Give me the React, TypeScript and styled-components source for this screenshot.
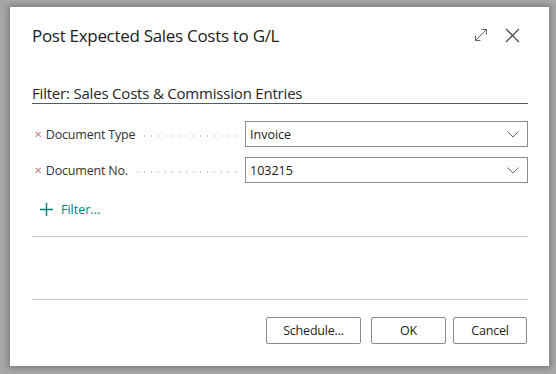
import React from "react";
import styled, { createGlobalStyle } from "styled-components";

const Global = createGlobalStyle`
  html, body { margin: 0; padding: 0; background: #a7a7a7; }
  body { font-family: "Open Sans", "Noto Sans", sans-serif; }
  * { box-sizing: border-box; }
`;

const Page = styled.div`
  width: 556px;
  height: 374px;
  padding: 7px 7px 8px 10px;
  display: flex;
  align-items: flex-start;
`;

const Dialog = styled.div`
  width: 539px;
  height: 359px;
  background: #fff;
  box-shadow: 0 0 6px 2px rgba(0, 0, 0, 0.25);
  padding: 0 21px 0 22px;
  display: flex;
  flex-direction: column;
`;

const Header = styled.div`
  display: flex;
  align-items: center;
  justify-content: space-between;
  height: 56px;
`;

const Title = styled.h1`
  margin: 0;
  font-size: 17px;
  font-weight: 500;
  color: #1c1c1c;
  letter-spacing: -0.3px;
`;

const HeaderIcons = styled.div`
  display: flex;
  align-items: center;
  gap: 17px;
  margin-right: 8px;
  color: #505050;
`;

const SectionTitle = styled.div`
  margin-top: 20px;
  font-size: 15px;
  font-weight: 500;
  color: #262626;
  letter-spacing: -0.2px;
  padding-bottom: 0px;
  border-bottom: 1px solid #4f5d6b;
`;

const Fields = styled.div`
  display: flex;
  flex-direction: column;
  gap: 10px;
  margin-top: 17px;
`;

const Row = styled.div`
  display: flex;
  align-items: center;
  height: 26px;
`;

const Label = styled.div`
  width: 213px;
  display: flex;
  align-items: center;
  font-size: 12.5px;
  letter-spacing: -0.2px;
  color: #333;
  padding-left: 2px;
`;

const Remove = styled.span`
  color: #c48080;
  font-size: 10px;
  margin-right: 4px;
  line-height: 1;
`;

const Leader = styled.span`
  flex: 1;
  height: 2px;
  margin: 4px 4px 0 6px;
  background-image: radial-gradient(circle, #c8c8c8 0.8px, transparent 1px);
  background-size: 7px 2px;
  background-repeat: repeat-x;
`;

const Select = styled.div`
  flex: 1;
  height: 26px;
  border: 1px solid #8a8a8a;
  display: flex;
  align-items: center;
  justify-content: space-between;
  padding: 0 8px 0 4px;
  font-size: 12.5px;
  color: #212121;
`;

const AddFilter = styled.div`
  display: flex;
  align-items: center;
  gap: 8px;
  margin-top: 18px;
  padding-left: 8px;
  font-size: 12.5px;
  color: #00807b;
`;

const Divider = styled.div<{ $top: number }>`
  margin-top: ${(p) => p.$top}px;
  height: 1px;
  background: #c4c4c4;
`;

const Footer = styled.div`
  display: flex;
  justify-content: flex-end;
  margin-top: 17px;
  padding-right: 1px;
`;

const Button = styled.button<{ $w: number; $gap?: number }>`
  width: ${(p) => p.$w}px;
  margin-left: ${(p) => p.$gap ?? 0}px;
  height: 27px;
  background: #fff;
  border: 1px solid #8a8a8a;
  border-radius: 2px;
  font-family: "Open Sans", "Noto Sans", sans-serif;
  font-size: 12.5px;
  letter-spacing: -0.2px;
  color: #212121;
  padding: 0;
`;

const Chevron = () => (
  <svg width="12" height="7" viewBox="0 0 12 7">
    <path d="M0.5 0.5 L6 6 L11.5 0.5" fill="none" stroke="#666" strokeWidth="1" />
  </svg>
);

const ExpandIcon = () => (
  <svg width="14" height="14" viewBox="0 0 14 14">
    <path
      d="M1.5 12.5 L12.5 1.5 M7.5 1.5 H12.5 V6.5 M1.5 7.5 V12.5 H6.5"
      fill="none"
      stroke="#666"
      strokeWidth="1"
    />
  </svg>
);

const CloseIcon = () => (
  <svg width="15" height="15" viewBox="0 0 15 15">
    <path d="M1 1 L14 14 M14 1 L1 14" fill="none" stroke="#505050" strokeWidth="1.3" />
  </svg>
);

const PlusIcon = () => (
  <svg width="13" height="13" viewBox="0 0 13 13">
    <path d="M6.5 0 V13 M0 6.5 H13" fill="none" stroke="#00807b" strokeWidth="1.4" />
  </svg>
);

const fields = [
  { label: "Document Type", value: "Invoice" },
  { label: "Document No.", value: "103215" },
];

export default function App() {
  return (
    <>
      <Global />
      <Page>
        <Dialog>
          <Header>
            <Title>Post Expected Sales Costs to G/L</Title>
            <HeaderIcons>
              <ExpandIcon />
              <CloseIcon />
            </HeaderIcons>
          </Header>
          <SectionTitle>Filter: Sales Costs &amp; Commission Entries</SectionTitle>
          <Fields>
            {fields.map((f) => (
              <Row key={f.label}>
                <Label>
                  <Remove>✕</Remove>
                  {f.label}
                  <Leader />
                </Label>
                <Select>
                  <span>{f.value}</span>
                  <Chevron />
                </Select>
              </Row>
            ))}
          </Fields>
          <AddFilter>
            <PlusIcon />
            <span>Filter...</span>
          </AddFilter>
          <Divider $top={18} />
          <Divider $top={62} />
          <Footer>
            <Button $w={95}>Schedule...</Button>
            <Button $w={75} $gap={10}>OK</Button>
            <Button $w={74} $gap={7}>Cancel</Button>
          </Footer>
        </Dialog>
      </Page>
    </>
  );
}
